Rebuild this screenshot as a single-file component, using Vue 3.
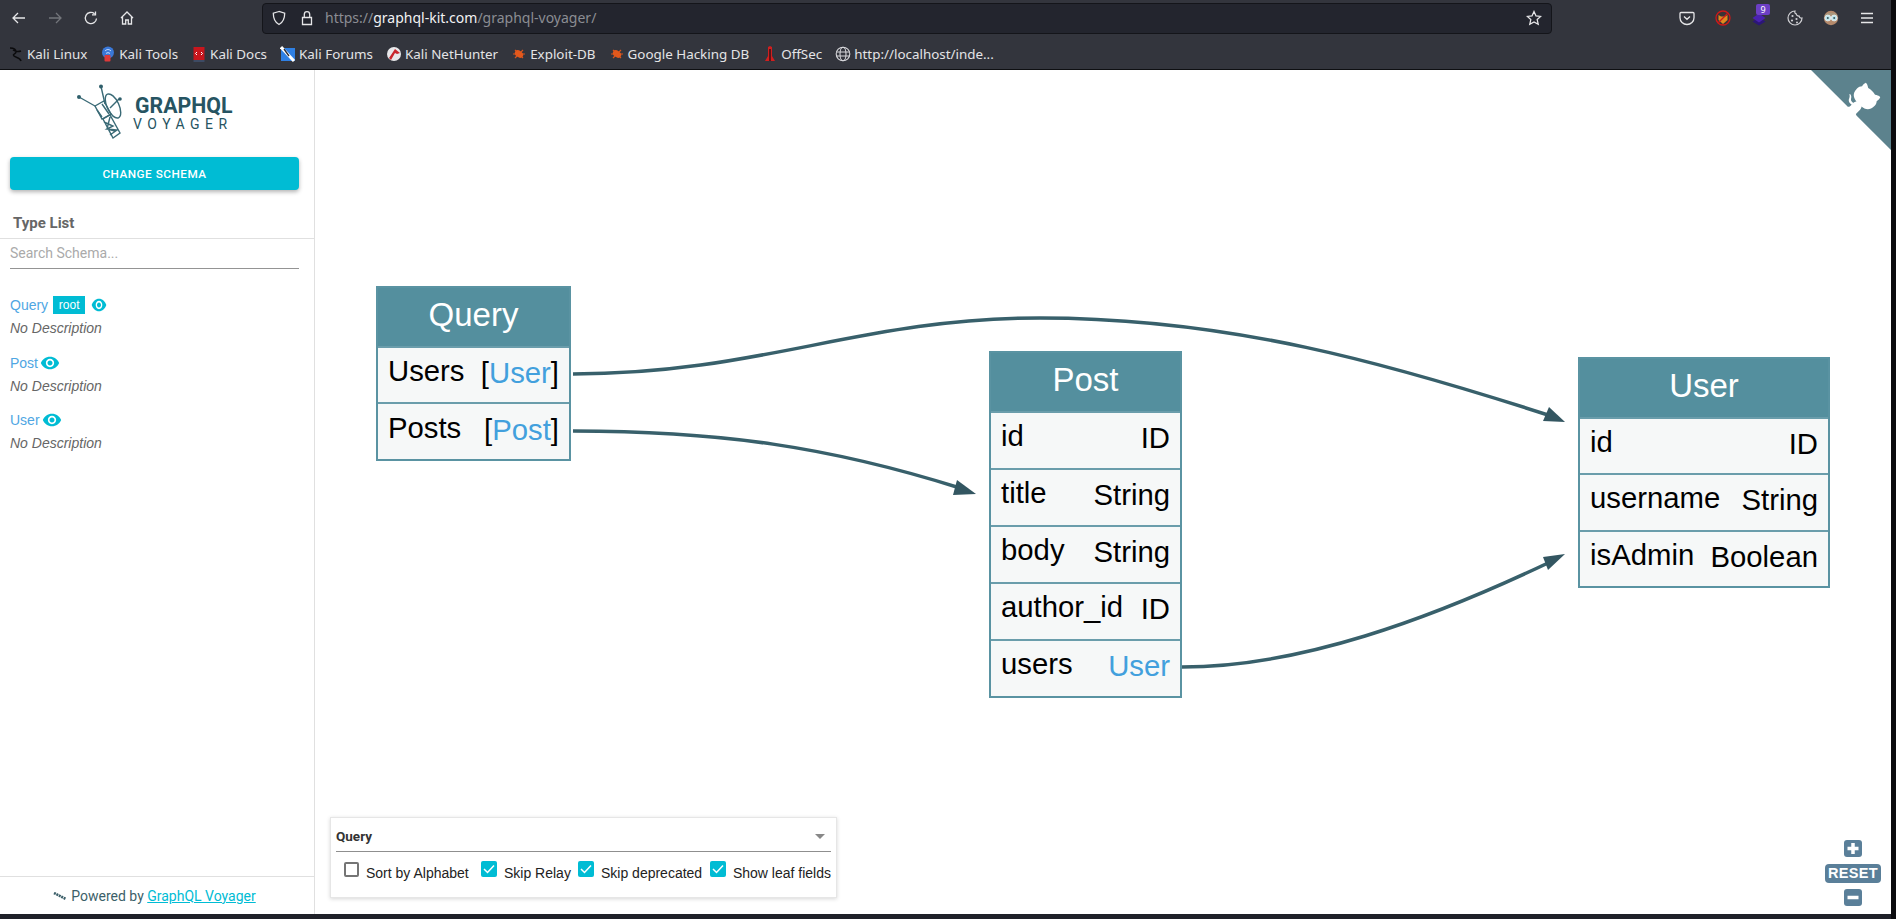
<template>
  <div class="screen">
    <div class="window">
      <!-- browser toolbar -->
      <div class="toolbar">
        <div class="nav">
          <svg class="nav-icon" viewBox="0 0 16 16"><path d="M14 8H2.500M7 3 2 8l5 5" /></svg>
          <svg class="nav-icon off" viewBox="0 0 16 16"><path d="M2 8h11.500M9 3l5 5-5 5" /></svg>
          <svg class="nav-icon" viewBox="0 0 16 16"><path d="M13.500 8.500A5.600 5.600 0 1 1 11.500 3.700M12.500 1.500v3.400H9" /></svg>
          <svg class="nav-icon" viewBox="0 0 16 16"><path d="M2 8 8 2l6 6M3.500 7v7h3.200v-4h2.600v4h3.200V7" /></svg>
        </div>
        <div class="urlbar">
          <svg class="nav-icon small" viewBox="0 0 16 16"><path d="M8 1.500 2.300 3.200c0 5.500 1.500 9 5.700 11.300 4.200-2.300 5.700-5.800 5.700-11.300z" /></svg>
          <svg class="nav-icon small lock" viewBox="0 0 16 16"><path d="M3.500 7.500h9v7h-9zM5.300 7.500V4.400a2.700 2.700 0 0 1 5.400 0v3.100" /></svg>
          <span class="url"><span class="dim">https://</span>graphql-kit.com<span class="dim">/graphql-voyager/</span></span>
          <svg class="nav-icon star" viewBox="0 0 16 16"><path d="m8 1.500 2 4.400 4.700.5-3.500 3.200 1 4.700L8 11.900l-4.200 2.400 1-4.700L1.300 6.400 6 5.900z" /></svg>
        </div>
        <div class="extensions">
          <svg class="nav-icon" viewBox="0 0 16 16"><path d="M2 2.500h12c.6 0 1 .4 1 1v4.200a7 6.800 0 0 1-14 0V3.500c0-.6.4-1 1-1zM5 6.500l3 2.800 3-2.800" /></svg>
          <svg class="ext" viewBox="0 0 16 16">
            <circle cx="8" cy="8" r="7" fill="#3b3335" stroke="#d01818" stroke-width="1.300" />
            <path d="M3.500 5 6 6.500h4L12.500 5v5L8 14l-4.500-4z" fill="#e08a1e" />
            <path d="m3.500 12.500 9-9" stroke="#d01818" stroke-width="1.300" />
          </svg>
          <span class="stack">
            <svg class="ext" viewBox="0 0 16 16">
              <path d="m8 7.500 6.500 4L8 15.500l-6.500-4z" fill="#2c1679" />
              <path d="m8 3.500 6.500 4.500L8 12.500 1.500 8z" fill="#4a22b0" />
            </svg>
            <span class="badge">9</span>
          </span>
          <svg class="ext" viewBox="0 0 16 16">
            <path d="M8 1a7 7 0 1 0 7 7c-1.500.3-2.600-.5-2.800-1.900-1.500.2-2.900-.8-3-2.300C7.900 3.500 7.500 2.200 8 1z" fill="none" stroke="#d0d0d4" stroke-width="1.200" />
            <circle cx="5.500" cy="6" r="1.100" fill="#d0d0d4" /><circle cx="5" cy="10.500" r="1.100" fill="#d0d0d4" /><circle cx="9.500" cy="9" r="1.100" fill="#d0d0d4" /><circle cx="10" cy="12.500" r="1" fill="#d0d0d4" />
          </svg>
          <svg class="ext" viewBox="0 0 16 16">
            <circle cx="8" cy="8" r="7.200" fill="#b58a6c" />
            <path d="M1.500 5.500C3 1.800 13 1.800 14.500 5.500z" fill="#a9977e" />
            <circle cx="4.800" cy="8" r="2.900" fill="#bfe4ea" stroke="#dfe9ea" /><circle cx="11.200" cy="8" r="2.900" fill="#bfe4ea" stroke="#dfe9ea" />
            <circle cx="4.800" cy="8" r="1" fill="#33535c" /><circle cx="11.200" cy="8" r="1" fill="#33535c" />
          </svg>
          <svg class="nav-icon" viewBox="0 0 16 16"><path d="M2 3.500h12M2 8h12M2 12.500h12" /></svg>
        </div>
      </div>

      <!-- bookmarks -->
      <div class="bookmarks">
        <div v-for="b in bookmarks" :key="b.label" class="bookmark">
          <svg class="fav" viewBox="0 0 16 16" v-html="b.icon"></svg>
          <span>{{ b.label }}</span>
        </div>
      </div>

      <div class="page">
        <aside class="sidebar">
          <div class="logo">
            <svg class="logo-mark" viewBox="0 0 46 56">
              <g fill="none" stroke="#3a6a76" stroke-width="1.400">
                <path d="M24 2.500 28 20M2 13l16 9" />
                <path d="m18 22 9-5 7 13-9 5z" />
                <path d="m20 26 5 7M25 20l7 10" />
                <path d="m26 35 7-4 10 18-7 5zM27 38l9 4-6 3 10 1-7 5M33 33l-3 12 8 2" />
                <ellipse cx="36" cy="22" rx="6" ry="13" transform="rotate(-25 36 22)" />
                <path d="m33 24 9-9" />
              </g>
              <circle cx="24" cy="2.500" r="2" fill="#2f5f6b" />
              <circle cx="2" cy="13" r="2" fill="#2f5f6b" />
              <circle cx="43" cy="15" r="1.800" fill="#2f5f6b" />
            </svg>
            <div class="logo-text">
              <div class="logo-top">GRAPHQL</div>
              <div class="logo-bottom">VOYAGER</div>
            </div>
          </div>
          <button class="change-btn">CHANGE SCHEMA</button>
          <div class="title-row">Type List</div>
          <div class="search">
            <input placeholder="Search Schema..." />
          </div>
          <div class="type-list">
            <div v-for="t in types" :key="t.name" class="type-item">
              <div class="type-name">
                <span>{{ t.name }}</span>
                <span v-if="t.root" class="root">root</span>
                <svg class="eye" :class="{ narrow: t.root }" viewBox="0 0 24 24" preserveAspectRatio="none"><path d="M12 4.500C7 4.500 2.730 7.610 1 12c1.730 4.390 6 7.500 11 7.500s9.270-3.110 11-7.500c-1.730-4.390-6-7.500-11-7.500zM12 17c-2.760 0-5-2.240-5-5s2.240-5 5-5 5 2.240 5 5-2.240 5-5 5zm0-8c-1.660 0-3 1.340-3 3s1.340 3 3 3 3-1.340 3-3-1.340-3-3-3z" /></svg>
              </div>
              <div class="type-desc">No Description</div>
            </div>
          </div>
          <div class="powered">
            <svg class="powered-icon" viewBox="0 0 14 8"><path d="m1 1 12 6" stroke="#3c5f69" stroke-width="2.600" stroke-dasharray="2 .7" fill="none" /></svg>
            <span>Powered by <a class="powered-link">GraphQL Voyager</a></span>
          </div>
        </aside>

        <main class="graph">
          <svg class="edges" viewBox="315 70 1576 844">
            <g fill="none" stroke="#38606b" stroke-width="3.500">
              <path d="M573 374C760 374 860 318 1040 318C1230 318 1390 364 1548 415" />
              <path d="M573 431C720 431 830 447 960 488" />
              <path d="M1182 667C1300 667 1430 619 1548 563" />
            </g>
            <path d="m1565 422-22-1 6-14z" fill="#335661" />
            <path d="m976 494-23 1 4-15z" fill="#335661" />
            <path d="m1565 554-17 16-5-13z" fill="#335661" />
          </svg>

          <div
            v-for="n in nodes"
            :key="n.title"
            class="node"
            :style="{ left: n.x + 'px', top: n.y + 'px', width: n.w + 'px', height: n.h + 'px' }"
          >
            <div class="node-head">{{ n.title }}</div>
            <div v-for="r in n.rows" :key="r[0]" class="node-row">
              <span class="field">{{ r[0] }}</span>
              <span class="ftype">
                <template v-if="r[2]">[<span class="link">{{ r[1] }}</span>]</template>
                <span v-else :class="{ link: r[3] }">{{ r[1] }}</span>
              </span>
            </div>
          </div>

          <svg class="corner" viewBox="0 0 250 250">
            <path d="M0,0 L115,115 L130,115 L142,142 L250,250 L250,0 Z" fill="#5c828d" />
            <path d="M128.300,109.000 C113.800,99.700 119.000,89.600 119.000,89.600 C122.000,82.700 120.500,78.600 120.500,78.600 C119.200,72.000 123.400,76.300 123.400,76.300 C127.300,80.900 125.500,87.300 125.500,87.300 C122.900,97.600 130.600,101.900 134.400,103.200" fill="#fff" />
            <path d="M115.000,115.000 C114.900,115.100 118.700,116.500 119.800,115.400 L133.700,101.600 C136.900,99.200 139.900,98.400 142.200,98.600 C133.800,88.000 127.500,74.400 143.800,58.000 C148.500,53.400 154.000,51.200 159.700,51.000 C160.300,49.400 163.200,43.600 171.400,40.100 C171.400,40.100 176.100,42.500 178.800,56.200 C183.100,58.600 187.200,61.800 190.900,65.400 C194.500,69.000 197.700,73.200 200.100,77.600 C213.800,80.200 216.300,84.900 216.300,84.900 C212.700,93.100 206.900,96.000 205.400,96.600 C205.100,102.400 203.000,107.800 198.300,112.500 C181.900,128.900 168.300,122.500 157.700,114.100 C157.900,116.900 156.700,120.900 152.700,124.900 L141.000,136.500 C139.800,137.700 141.600,141.900 141.800,141.800 Z" fill="#fff" />
          </svg>

          <div class="settings">
            <div class="select-row">
              <span>Query</span>
              <span class="caret"></span>
            </div>
            <div class="checks">
              <label v-for="c in checks" :key="c.label" class="check" :class="c.cls">
                <span class="box" :class="{ on: c.on }">
                  <svg v-if="c.on" viewBox="0 0 16 16"><path d="m3 8 3.500 3.500L13 4.500" /></svg>
                </span>
                {{ c.label }}
              </label>
            </div>
          </div>

          <div class="zoomer">
            <div class="zoom-btn">
              <svg viewBox="0 0 18 16"><path d="M3.500 8h11M9 2.500v11" /></svg>
            </div>
            <div class="reset">RESET</div>
            <div class="zoom-btn">
              <svg viewBox="0 0 18 16"><path d="M3.500 8h11" /></svg>
            </div>
          </div>
        </main>
      </div>
      <div class="bottom-edge"></div>
    </div>
  </div>
</template>

<script setup>
const bug = '<path d="M4 4l8 8M12 4l-8 8M2 8h12" stroke="#d9541e" stroke-width="1.200"/><ellipse cx="8" cy="8" rx="4.500" ry="3.200" fill="#e2581c" transform="rotate(35 8 8)"/>'

const bookmarks = [
  { label: 'Kali Linux', icon: '<path d="M2 2c4 0 6 2 6 4S4 8 6 10s6 1 7 5M5 4c3 2 5 2 8 1" fill="none" stroke="#0b0b0d" stroke-width="1.500"/>' },
  { label: 'Kali Tools', icon: '<circle cx="8" cy="6.500" r="6" fill="#3a78d8"/><rect x="4.500" y="9" width="6" height="6.500" rx="1" fill="#dc3a3a"/><path d="M5 5c2-2 4-2 6 0M6 7.500c1-1 3-1 4 0" stroke="#cfe2ff" fill="none"/>' },
  { label: 'Kali Docs', icon: '<rect x="2.500" y="1" width="11" height="13" fill="#c8161d"/><rect x="2.500" y="14" width="11" height="2" fill="#3d4a63"/><path d="m6 6-1.500 1.500L6 9M10 6l1.500 1.500L10 9" stroke="#fff" fill="none"/>' },
  { label: 'Kali Forums', icon: '<rect x="1" y="2" width="14" height="13" fill="#2f80e4"/><path d="m1 1 13 14" stroke="#fff" stroke-width="3"/><path d="m4 3 5 7" stroke="#2b2b33" stroke-width="1.300"/>' },
  { label: 'Kali NetHunter', icon: '<circle cx="8" cy="8" r="7" fill="#e8e8ea"/><path d="M3 12 9 3l5 4-3 1-2-1-4 7z" fill="#c9252c"/>' },
  { label: 'Exploit-DB', icon: bug },
  { label: 'Google Hacking DB', icon: bug },
  { label: 'OffSec', icon: '<path d="M8 0 10 1v9l3 5H3l3-5V1z" fill="#d01f1f"/><rect x="7.300" y="3" width="1.400" height="12" fill="#2a1214"/>' },
  { label: 'http://localhost/inde...', icon: '<g fill="none" stroke="#d6d6da" stroke-width="1.100"><circle cx="8" cy="8" r="6.800"/><ellipse cx="8" cy="8" rx="3" ry="6.800"/><path d="M1.500 6h13M1.500 10h13"/></g>' }
]

const types = [
  { name: 'Query', root: true },
  { name: 'Post', root: false },
  { name: 'User', root: false }
]

// r = [field, type, isList, isLink]
const nodes = [
  {
    title: 'Query', x: 61, y: 216, w: 195, h: 175,
    rows: [['Users', 'User', true], ['Posts', 'Post', true]]
  },
  {
    title: 'Post', x: 674, y: 281, w: 193, h: 347,
    rows: [['id', 'ID'], ['title', 'String'], ['body', 'String'], ['author_id', 'ID'], ['users', 'User', false, true]]
  },
  {
    title: 'User', x: 1263, y: 287, w: 252, h: 231,
    rows: [['id', 'ID'], ['username', 'String'], ['isAdmin', 'Boolean']]
  }
]

const checks = [
  { label: 'Sort by Alphabet', on: false, cls: 'c1' },
  { label: 'Skip Relay', on: true, cls: 'c2' },
  { label: 'Skip deprecated', on: true, cls: 'c3' },
  { label: 'Show leaf fields', on: true, cls: 'c4' }
]
</script>

<style>
html, body {
  margin: 0;
  background: #0b0b0e;
  overflow: hidden;
}
</style>

<style scoped>
.screen {
  width: 1896px;
  height: 919px;
  background: #0b0b0e;
}
.window {
  width: 1891px;
  height: 919px;
  display: flex;
  flex-direction: column;
}

/* browser bars */
.toolbar {
  height: 37px;
  box-sizing: border-box;
  background: #33353d;
  display: flex;
  align-items: center;
  padding-bottom: 1px;
}
.nav {
  width: 262px;
  box-sizing: border-box;
  padding-left: 11px;
  display: flex;
  gap: 20px;
}
.nav-icon {
  width: 16px;
  height: 16px;
  fill: none;
  stroke: #e6e6e8;
  stroke-width: 1.300;
  flex: none;
}
.nav-icon.off {
  stroke: #73757b;
}
.urlbar {
  width: 1290px;
  height: 31px;
  box-sizing: border-box;
  background: #23252e;
  border: 1px solid #14151a;
  border-radius: 4px;
  display: flex;
  align-items: center;
  padding: 0 9px 0 8px;
}
.nav-icon.lock {
  margin-left: 12px;
}
.url {
  margin: 0 0 2px 10px;
  color: #f2f2f4;
  font: 14px "Noto Sans", sans-serif;
  flex: 1;
}
.dim {
  color: #8b8d93;
}
.extensions {
  flex: 1;
  display: flex;
  align-items: center;
  justify-content: flex-end;
  gap: 20px;
  padding-right: 16px;
}
.ext {
  width: 16px;
  height: 16px;
  display: block;
  flex: none;
}
.stack {
  position: relative;
  display: block;
}
.badge {
  position: absolute;
  left: 5px;
  top: -6px;
  width: 14px;
  height: 11px;
  background: #6c3fc4;
  border-radius: 2px;
  color: #fff;
  font: 9px/11px "Noto Sans", sans-serif;
  text-align: center;
}
.bookmarks {
  height: 33px;
  box-sizing: border-box;
  background: #33353d;
  border-bottom: 1px solid #0e0f12;
  display: flex;
  align-items: center;
  padding: 1px 0 0 8px;
  gap: 13px;
  color: #e4e4e6;
  font: 13.400px "Noto Sans", sans-serif;
}
.bookmark {
  display: flex;
  align-items: center;
  gap: 3px;
}
.fav {
  width: 16px;
  height: 16px;
  display: block;
}

/* page */
.page {
  height: 844px;
  display: flex;
  background: #fff;
}
.bottom-edge {
  flex: 1;
  background: #1f2129;
}
.sidebar {
  width: 315px;
  box-sizing: border-box;
  border-right: 1px solid #e0e0e0;
  display: flex;
  flex-direction: column;
  font-family: Roboto, sans-serif;
}
.logo {
  height: 87px;
  box-sizing: border-box;
  padding: 14px 0 0 77px;
  display: flex;
  gap: 12px;
}
.logo-mark {
  width: 46px;
  height: 56px;
  flex: none;
}
.logo-text {
  padding-top: 12px;
  color: #265462;
}
.logo-top {
  font-size: 21.300px;
  line-height: 20px;
  font-weight: 700;
}
.logo-bottom {
  margin-left: -2px;
  font-size: 14px;
  line-height: 16px;
  letter-spacing: 5.500px;
}
.change-btn {
  margin: 0 15px 0 10px;
  height: 33px;
  border: none;
  border-radius: 4px;
  background: #00bcd4;
  color: #fff;
  font: 500 11.750px Roboto, sans-serif;
  letter-spacing: .5px;
  box-shadow: 0 2px 4px rgba(0, 0, 0, .3);
}
.title-row {
  height: 49px;
  box-sizing: border-box;
  padding: 24px 0 0 13px;
  border-bottom: 1px solid #e0e0e0;
  color: #666;
  font-weight: 700;
  font-size: 15px;
  line-height: 18px;
}
.search {
  margin: 0 15px 0 10px;
  height: 29px;
  border-bottom: 1px solid #949494;
}
.search input {
  width: 100%;
  height: 27px;
  padding: 0;
  border: none;
  outline: none;
  font: 14px Roboto, sans-serif;
}
.search input::placeholder {
  color: #aaa;
}
.type-list {
  flex: 1;
  padding: 25px 0 0 10px;
  font-family: "Liberation Sans", sans-serif;
  font-size: 14px;
}
.type-item {
  height: 57.500px;
}
.type-name {
  height: 22px;
  display: flex;
  align-items: center;
  color: #4fa6e3;
}
.root {
  margin-left: 5px;
  width: 32px;
  height: 18px;
  background: #00bcd4;
  color: #fff;
  font-size: 12px;
  line-height: 19px;
  text-align: center;
}
.eye {
  width: 20px;
  height: 20px;
  margin-left: 2px;
  fill: #00bcd4;
}
.eye.narrow {
  width: 16px;
  height: 20px;
  margin-left: 6px;
}
.type-desc {
  color: #666;
  font-style: italic;
  line-height: 24px;
}
.powered {
  height: 38px;
  box-sizing: border-box;
  border-top: 1px solid #e0e0e0;
  display: flex;
  justify-content: center;
  align-items: center;
  gap: 4px;
  color: #3c5f69;
  font-size: 14px;
  padding-right: 5px;
}
.powered-icon {
  width: 14px;
  height: 8px;
}
.powered-link {
  color: #00bcd4;
  text-decoration: underline;
}

/* graph canvas */
.graph {
  position: relative;
  flex: 1;
  overflow: hidden;
  background: #fff;
}
.edges {
  position: absolute;
  inset: 0;
  width: 1576px;
  height: 844px;
}
.node {
  position: absolute;
  display: flex;
  flex-direction: column;
  box-sizing: border-box;
  border: 2px solid #5a93a2;
  background: #f6f8f8;
  font-family: "Liberation Sans", sans-serif;
  color: #000;
}
.node-head {
  height: 57.500px;
  flex: none;
  background: #548f9e;
  color: #fff;
  font-size: 33px;
  line-height: 54px;
  text-align: center;
}
.node-row {
  flex: 1;
  display: flex;
  justify-content: space-between;
  align-items: center;
  padding: 0 10px 4px;
  font-size: 29.300px;
  border-top: 2px solid #6a9dab;
  white-space: nowrap;
}
.field {
  margin-bottom: 4px;
}
.link {
  color: #42a0dd;
}
.corner {
  position: absolute;
  top: 0;
  right: 0;
  width: 80px;
  height: 80px;
}
.settings {
  position: absolute;
  left: 15px;
  bottom: 16px;
  width: 507px;
  height: 81px;
  box-sizing: border-box;
  background: #fff;
  border: 1px solid #e6e6e6;
  box-shadow: 0 1px 4px rgba(0, 0, 0, .16);
  padding: 0 5px;
  font-family: "Liberation Sans", sans-serif;
}
.select-row {
  height: 34px;
  box-sizing: border-box;
  border-bottom: 1px solid #8f8f8f;
  padding: 3px 6px 0 0;
  display: flex;
  justify-content: space-between;
  align-items: center;
  font: 700 13.500px Roboto, sans-serif;
  color: #333;
}
.caret {
  width: 0;
  height: 0;
  border: 5px solid transparent;
  border-top-color: #888;
  border-bottom: none;
}
.checks {
  display: flex;
  padding: 10px 0 0 8px;
}
.check {
  display: flex;
  align-items: flex-start;
  font-size: 14px;
  line-height: 23px;
  color: #222;
  white-space: nowrap;
}
.c1 { width: 137px; }
.c2 { width: 97px; }
.c3 { width: 132px; }
.box {
  width: 15px;
  height: 15px;
  box-sizing: border-box;
  border: 2px solid #757575;
  border-radius: 2px;
  margin-right: 7px;
  flex: none;
}
.box.on {
  width: 16px;
  height: 16px;
  margin-top: -1px;
  border: none;
  background: #00bcd4;
}
.box svg {
  display: block;
  fill: none;
  stroke: #fff;
  stroke-width: 1.500;
}
.zoomer {
  position: absolute;
  right: 10px;
  bottom: 8px;
  display: flex;
  flex-direction: column;
  align-items: center;
  gap: 6px;
}
.zoom-btn {
  width: 18px;
  height: 17px;
  background: #5a7f99;
  border-radius: 3px;
}
.zoom-btn:first-child {
  margin-bottom: 1px;
}
.zoom-btn svg {
  display: block;
  width: 18px;
  height: 17px;
  fill: none;
  stroke: #fff;
  stroke-width: 3.500;
}
.reset {
  width: 56px;
  height: 19px;
  background: #5a7f99;
  border-radius: 4px;
  color: #fff;
  font: 700 14.500px/19px "Liberation Sans", sans-serif;
  letter-spacing: .3px;
  text-align: center;
}
</style>
